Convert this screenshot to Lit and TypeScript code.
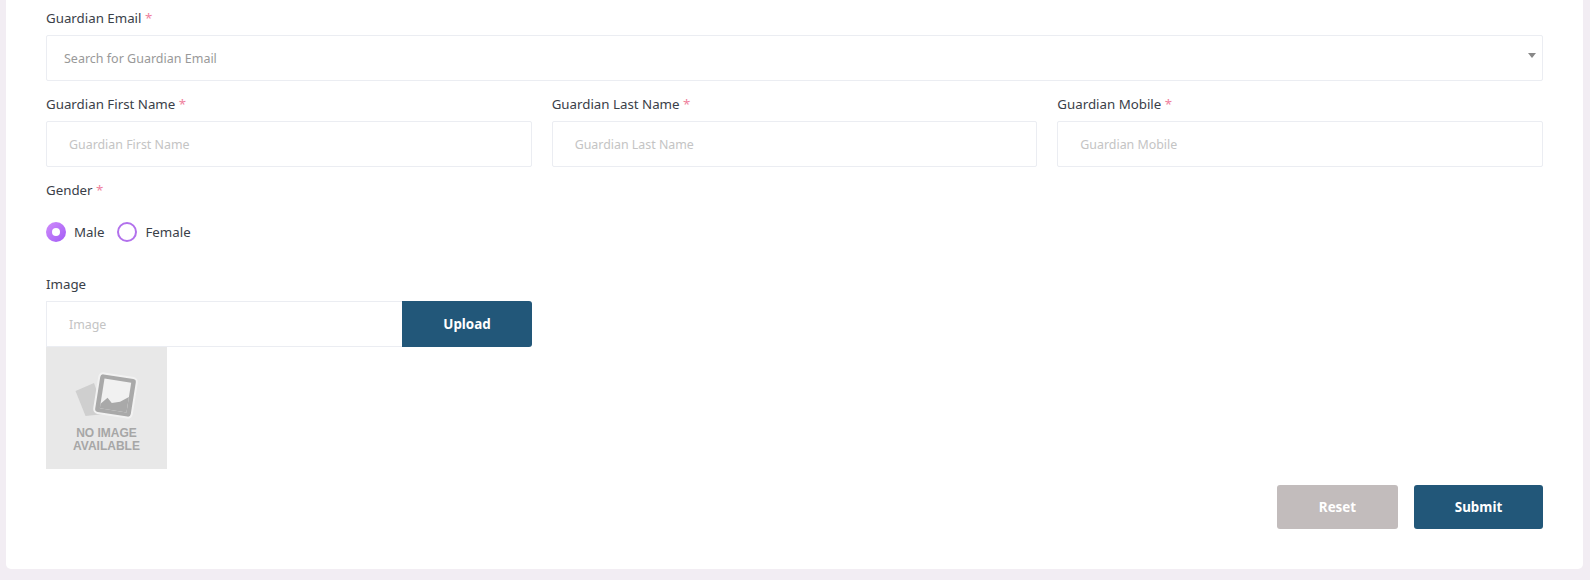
import { LitElement, html, css } from "lit";
import { customElement } from "lit/decorators.js";

@customElement("app-root")
export class AppRoot extends LitElement {
  static styles = css`
    :host {
      display: block;
      width: 1590px;
      height: 580px;
      box-sizing: border-box;
      padding: 0 7px 11px 6px;
      background: #f2edf3;
      font-family: "Noto Sans", "Open Sans", sans-serif;
      font-size: 13.3px;
      color: #3a4048;
      overflow: hidden;
    }
    .card {
      height: 569px;
      box-sizing: border-box;
      background: #fff;
      border-radius: 0 0 5px 5px;
      padding: 8px 40px 0;
    }
    .label {
      display: block;
      height: 20px;
      line-height: 20px;
      margin-bottom: 7px;
    }
    .req { color: #ef7f9d; }
    .control {
      box-sizing: border-box;
      height: 46px;
      display: flex;
      align-items: center;
      background: #fff;
      border: 1px solid #ebedf2;
      border-radius: 2px;
      padding-left: 22px;
      font-size: 12.4px;
      color: #c4c4c4;
    }
    .select {
      position: relative;
      padding-left: 17px;
      font-size: 12.5px;
      color: #999;
      margin-bottom: 13px;
    }
    .caret {
      position: absolute;
      right: 6px;
      top: 17px;
      width: 0;
      height: 0;
      border-left: 4px solid transparent;
      border-right: 4px solid transparent;
      border-top: 5px solid #888;
    }
    .row {
      display: grid;
      grid-template-columns: repeat(3, 1fr);
      column-gap: 20px;
    }
    .gender { margin-top: 13px; }
    .radios {
      display: flex;
      align-items: center;
      height: 21px;
      margin-top: 21px;
    }
    .radio {
      box-sizing: border-box;
      width: 20px;
      height: 20px;
      border-radius: 50%;
      margin-right: 8px;
      flex: none;
    }
    .on {
      background: linear-gradient(135deg, #d08cfb, #a25cf5);
      display: flex;
      align-items: center;
      justify-content: center;
    }
    .on::after {
      content: "";
      width: 8px;
      height: 8px;
      border-radius: 50%;
      background: #fff;
    }
    .off { border: 2px solid #b271ec; }
    .opt { margin-right: 13px; }
    .image { margin-top: 32px; }
    .upload-row { display: flex; width: 486px; }
    .upload-row .control { flex: 1; border-radius: 0; border-right: 0; }
    button {
      border: 0;
      border-radius: 3px;
      color: #fff;
      font: 700 13.4px "Noto Sans", sans-serif;
      background: #225779;
      padding: 0;
    }
    .upload { width: 130px; height: 46px; border-radius: 0 3px 3px 0; }
    .noimg {
      width: 121px;
      height: 122px;
      background: #e8e8e8;
      display: flex;
      flex-direction: column;
      align-items: center;
      padding-top: 21px;
      box-sizing: border-box;
    }
    .noimg svg { display: block; }
    .noimg span {
      font: 700 12px/13px "Liberation Sans", sans-serif;
      color: #a6a6a6;
      text-align: center;
      margin-top: 3px;
    }
    .actions {
      display: flex;
      justify-content: flex-end;
      gap: 16px;
      margin-top: 16px;
    }
    .actions button { height: 44px; }
    .reset { width: 121px; background: #c2bcbc; }
    .submit { width: 129px; }
  `;

  render() {
    const req = html`<span class="req">*</span>`;
    return html`
      <div class="card">
        <span class="label">Guardian Email ${req}</span>
        <div class="control select">Search for Guardian Email<i class="caret"></i></div>
        <div class="row">
          <div><span class="label">Guardian First Name ${req}</span><div class="control">Guardian First Name</div></div>
          <div><span class="label">Guardian Last Name ${req}</span><div class="control">Guardian Last Name</div></div>
          <div><span class="label">Guardian Mobile ${req}</span><div class="control">Guardian Mobile</div></div>
        </div>
        <div class="gender"><span class="label">Gender ${req}</span></div>
        <div class="radios">
          <i class="radio on"></i><span class="opt">Male</span>
          <i class="radio off"></i><span>Female</span>
        </div>
        <div class="image"><span class="label">Image</span></div>
        <div class="upload-row">
          <div class="control">Image</div>
          <button class="upload">Upload</button>
        </div>
        <div class="noimg">
          <svg width="64" height="56" viewBox="0 0 64 56">
            <path d="M0.5 23 L19 15 L30 46 L10.5 48 Z" fill="#cfcfcf"/>
            <g transform="rotate(9 40.5 27.5)">
              <rect x="21.5" y="7.5" width="38" height="40" rx="4" fill="#a9a9a9" stroke="#f2f2f2" stroke-width="2"/>
              <rect x="27" y="12.5" width="27" height="30" fill="#f1f1f1"/>
              <path d="M27 38 L33 31 L38 35.5 L46 33 L54 27 L54 42.5 L27 42.5 Z" fill="#a9a9a9"/>
            </g>
          </svg>
          <span>NO IMAGE<br />AVAILABLE</span>
        </div>
        <div class="actions">
          <button class="reset">Reset</button>
          <button class="submit">Submit</button>
        </div>
      </div>
    `;
  }
}
